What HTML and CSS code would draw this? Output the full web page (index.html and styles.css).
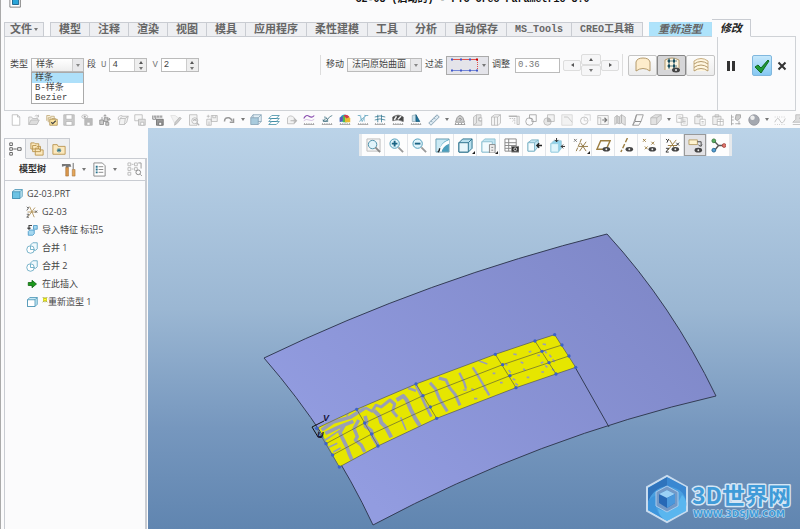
FILE: index.html
```html
<!DOCTYPE html>
<html lang="zh-CN">
<head>
  <meta charset="UTF-8" />
  <title>G2-03 (启动的) - PTC Creo Parametric 3.0</title>
  <link rel="stylesheet" href="styles.css">
</head>
<body>

  <header class="titlebar">
    <svg class="app-icon" viewBox="0 0 16 18"><path d="M1 0h12v16H1z" fill="#fff" stroke="#777"/><path d="M4 3h7v10H4z" fill="#2aa5d8" stroke="#125b86"/></svg>
    <h1>G2-03 (启动的) - PTC Creo Parametric 3.0</h1>
  </header>

  <!-- Ribbon tabs -->
  <nav class="tabs">
    <button class="tab file">文件<i class="caret"></i></button>
    <button class="tab">模型</button>
    <button class="tab">注释</button>
    <button class="tab">渲染</button>
    <button class="tab">视图</button>
    <button class="tab">模具</button>
    <button class="tab">应用程序</button>
    <button class="tab">柔性建模</button>
    <button class="tab">工具</button>
    <button class="tab">分析</button>
    <button class="tab">自动保存</button>
    <button class="tab small">MS_Tools</button>
    <button class="tab small">CREO工具箱</button>
    <button class="tab context">重新造型</button>
    <button class="tab active">修改</button>
  </nav>

  <!-- Ribbon -->
  <section class="ribbon">
    <div class="group">
      <label for="type">类型</label>
      <div class="drop type-drop">
        <select id="type">
          <option>样条</option>
          <option>B-样条</option>
          <option>Bezier</option>
        </select>
        <ul class="menu">
          <li class="selected">样条</li>
          <li>B-样条</li>
          <li>Bezier</li>
        </ul>
      </div>
      <span>段</span>
      <label class="axis" for="seg-u">U</label>
      <div class="spin">
        <input id="seg-u" type="text" value="4">
        <div class="spin-btns">
          <button aria-label="U +"><i class="caret up"></i></button>
          <button aria-label="U -"><i class="caret"></i></button>
        </div>
      </div>
      <label class="axis" for="seg-v">V</label>
      <div class="spin">
        <input id="seg-v" type="text" value="2">
        <div class="spin-btns">
          <button aria-label="V +"><i class="caret up"></i></button>
          <button aria-label="V -"><i class="caret"></i></button>
        </div>
      </div>
    </div>

    <div class="group edit">
      <label for="move">移动</label>
      <div class="drop move-drop">
        <select id="move">
          <option>法向原始曲面</option>
        </select>
      </div>
      <span>过滤</span>
      <button class="filter" aria-label="过滤">
        <svg viewBox="0 0 30 18"><path d="M3 3.500h25" stroke="#e0524e"/><path d="M28.500 4v10" stroke="#e0524e" stroke-dasharray="1 1"/><path d="M3 14.500h25" stroke="#7286d8"/><path d="M2 3.500h2M11 3.500h2M20 3.500h2M2 14.500h2M11 14.500h2M20 14.500h2M27 14.500h2" stroke="#4258c8" stroke-width="2"/><path d="M27 3.500h2" stroke="#c00" stroke-width="2"/></svg>
        <i class="caret"></i>
      </button>
      <label for="adjust">调整</label>
      <input id="adjust" class="adjust" type="text" value="0.36">
      <div class="pad">
        <button aria-label="左"><i class="caret left"></i></button>
        <div class="pad-mid">
          <button aria-label="上"><i class="caret up"></i></button>
          <button aria-label="下"><i class="caret"></i></button>
        </div>
        <button aria-label="右"><i class="caret right"></i></button>
      </div>
      <div class="modes">
        <button aria-label="曲面"><svg viewBox="0 0 20 18"><path d="M3 15V6q1-4 7-4t7 4v9q-7-5-14 0z" fill="#fdeccb" stroke="#b49a6c"/></svg></button>
        <button class="on" aria-label="控制点"><svg viewBox="0 0 20 18"><path d="M3 14V4q7-4 14 0v8" fill="#fbf3df" stroke="#b49a6c"/><path d="M7 2v11M12 2v11M5 5h10M5 10h10" stroke="#5a7f86"/><path d="M6 5h2M11 5h2M6 10h2M11 10h2" stroke="#164d5e" stroke-width="3"/><ellipse cx="14" cy="14" rx="4" ry="2.500" fill="#444"/><circle cx="14" cy="14" r="1" fill="#eee"/></svg></button>
        <button aria-label="曲线"><svg viewBox="0 0 20 18"><path d="M3 15V5q7-5 14 0v10" fill="#fff6e0" stroke="#c8ae80"/><path d="M3 8q7-5 14 0M3 11.500q7-5 14 0M3 15q7-5 14 0" stroke="#b49a6c"/></svg></button>
      </div>
    </div>

    <div class="confirm">
      <button class="pause" aria-label="暂停"><svg viewBox="0 0 10 12"><path d="M1 1h3v10H1zM6 1h3v10H6z" fill="#333"/></svg></button>
      <button class="ok" aria-label="确定"><svg viewBox="0 0 18 18"><path d="M2 10l3-2 3 3 7-8 1 1-8 12z" fill="#1f9a35" stroke="#0f6a20"/></svg></button>
      <button class="cancel" aria-label="取消"><svg viewBox="0 0 10 10"><path d="M1.500 1.500l7 7M8.500 1.500l-7 7" stroke="#333" stroke-width="2"/></svg></button>
    </div>
  </section>

  <!-- Quick access toolbar -->
  <div class="quickbar">
    <button aria-label="新建"><svg viewBox="0 0 16 16"><path d="M3 1h7l3 3v11H3zM10 1v3h3" fill="#fff"/></svg></button>
    <button aria-label="打开"><svg viewBox="0 0 16 16"><path d="M1 14V4h4l1 2h7v2" fill="#eee"/><path d="M1 14l3-6h11l-3 6z" fill="#ddd"/><path d="M9 3q3-3 5 0M14 1v3h-3"/></svg></button>
    <button aria-label="选择"><svg viewBox="0 0 16 16"><path d="M1 9V2h4l1 1h5v3M3 11V5h4l1 1h5" fill="#f8efd8" stroke="#bba36f"/><path d="M5 7h10v8H5z" fill="#fae3a0" stroke="#a98a4a"/><path d="M7 11l2 2 4-4" stroke="#444" stroke-width="1.500"/></svg></button>
    <button aria-label="保存"><svg viewBox="0 0 16 16"><path d="M1 1h14v14H1z" fill="#ccc"/><path d="M4 1h8v6H4zM4 10h8v5H4z" fill="#fff"/></svg></button>
    <button aria-label="备份"><svg viewBox="0 0 16 16"><path d="M5 6h10v9H5z" fill="#bbb"/><path d="M8 11h4v4H8z" fill="#fff"/><ellipse cx="5" cy="3.500" rx="4" ry="2.500"/><circle cx="5" cy="3.500" r="1" fill="#888"/></svg></button>
    <button aria-label="装配"><svg viewBox="0 0 16 16" stroke="#888"><path d="M1 8h5v6H1zM7 5h5v5H7zM9 11h4v4H9z" fill="#ccc"/><path d="M8 5V1M6 3l2-2 2 2M11 7h4M13 5l2 2-2 2M4 8V4"/></svg></button>
    <button aria-label="重新生成"><svg viewBox="0 0 16 16"><path d="M4 6l3-3h8l-2 8-3 3H3z" fill="#f2f2f2"/><path d="M4 6h7l-1 8M11 6l4-3M2 8q-2-6 5-6"/></svg></button>
    <button aria-label="保存副本"><svg viewBox="0 0 16 16"><path d="M1 1h10v8H1z" fill="#f8f8f8"/><path d="M6 7h9v8H6z" fill="#ddd"/><path d="M9 11h4v4H9z" fill="#fff"/></svg></button>
    <button aria-label="测量保存"><svg viewBox="0 0 16 16" stroke="#666"><path d="M1 2v5M3 2v3M5 2v5M7 2v3M9 2v3M11 2v3M13 2v3M1 7h4"/><path d="M6 7h9v8H6z" fill="#999"/><path d="M9 11h4v4H9z" fill="#fff"/></svg></button>
    <button aria-label="涂刷"><svg viewBox="0 0 16 16"><path d="M1 2h6l5 4-5 8z" fill="#f2f2f2" stroke="#ddd"/><path d="M7 11l6-7 2 2-6 7-3 2z" fill="#ccc"/></svg></button>
    <button aria-label="查找"><svg viewBox="0 0 16 16"><path d="M2 1h10v14H2z" fill="#f5f5f5"/><circle cx="9" cy="9" r="4"/><path d="M12 12l3 3M7 9q2-3 4 0" stroke-width="1.500"/></svg></button>
    <button aria-label="导出"><svg viewBox="0 0 16 16"><path d="M1 7h6v8H1zM7 2h8v8H7z" fill="#f2f2f2"/><path d="M9 2v3h4V2M3 1v4M1 3h4M4 10v5"/></svg></button>
    <button aria-label="重做"><svg viewBox="0 0 16 16"><path d="M2 10q0-6 6-5 3 1 4 4M14 6v5H9" stroke="#999" stroke-width="2"/></svg></button>
    <button class="more" aria-label="更多"><i class="caret"></i></button>
    <button aria-label="外观"><svg viewBox="0 0 16 16" stroke="#7f9eb1"><path d="M4 1h11v9H4z" fill="#e3eff6"/><path d="M1 5h10v9H1z" fill="#a9cbdd"/><path d="M1 5l3-4M11 5l4-4M11 14l4-4"/></svg></button>
    <button aria-label="层"><svg viewBox="0 0 16 16" stroke="#3787a0"><path d="M1 14l4-4h10l-4 4zM1 10l4-4h10l-4 4zM1 6l4-4h10l-4 4z" fill="#fff"/></svg></button>
    <button aria-label="注解"><svg viewBox="0 0 16 16"><path d="M2 13V5q4-5 9 0v8z" fill="#f2f2f2"/><path d="M6 9h8M11 6l3 3-3 3" stroke-width="1.500"/></svg></button>
    <button aria-label="曲率"><svg viewBox="0 0 16 16"><path d="M1 6q3-6 7-3t7-1" stroke="#8b4fb0" stroke-width="1.500"/><path d="M1 9q3-3 7-1t7-1" stroke="#c9b0d8"/><path d="M1 14h14M2 12v2M5 12v2M8 12v2M11 12v2M14 12v2" stroke="#999"/></svg></button>
    <button aria-label="半径"><svg viewBox="0 0 16 16"><path d="M2 8q5 3 7-1t6-5M4 4q5 0 5 6H3q0-4 5-4" stroke="#3c6d7e"/><path d="M1 14h14M2 12v2M5 12v2M8 12v2M11 12v2M14 12v2" stroke="#999"/></svg></button>
    <button aria-label="着色曲率"><svg viewBox="0 0 16 16"><g stroke="none"><path d="M1 10V5q4-6 8-4v10z" fill="#29a8c8"/><path d="M5 3q4-3 6 0v8H5z" fill="#55b94e"/><path d="M8 2q4-2 7 4v5H8z" fill="#e9ba31"/><path d="M6 2q4-3 8 2l-4 2z" fill="#d13a4d"/><path d="M1 5l4-2v6l-4 2z" fill="#6353ba"/></g><path d="M1 14h14M2 12v2M5 12v2M8 12v2M11 12v2M14 12v2" stroke="#999"/></svg></button>
    <button aria-label="偏移分析"><svg viewBox="0 0 16 16" stroke="#5a9db8"><path d="M1 2h3l3 8 4-8h4M3 10L12 2"/><path d="M5 1v9M10 1v9" stroke="#9bcadd"/><path d="M1 14h14M2 12v2M5 12v2M8 12v2M11 12v2M14 12v2" stroke="#999"/></svg></button>
    <button aria-label="网格"><svg viewBox="0 0 16 16" stroke="#2c738e"><path d="M1 4q7-3 14 0M1 8q7-3 14 0M5 1v10M10 1v10"/><path d="M1 14h14M2 12v2M5 12v2M8 12v2M11 12v2M14 12v2" stroke="#999"/></svg></button>
    <button aria-label="反射"><svg viewBox="0 0 16 16"><path d="M1 9V4q7-5 14 0v6q-7-4-14-1z" fill="#444" stroke="#666"/><path d="M3 8l3-5M8 7l4-4" stroke="#eee" stroke-width="2"/><path d="M1 14h14M2 12v2M5 12v2M8 12v2M11 12v2M14 12v2" stroke="#999"/></svg></button>
    <button aria-label="拔模"><svg viewBox="0 0 16 16"><path d="M3 10V2l5-1v9z" fill="#c7e1ec" stroke="#93abb5"/><path d="M8 1l5 9H8z" fill="#1d749e" stroke="#185a79"/><path d="M1 14h14M2 12v2M5 12v2M8 12v2M11 12v2M14 12v2" stroke="#999"/></svg></button>
    <button aria-label="测量"><svg viewBox="0 0 16 16" stroke="#6d8da3"><path d="M1 12L12 1l3 3L4 15z" fill="#deeaf2"/><path d="M4 9l2 2M6 7l1 1M8 5l2 2M10 3l1 1"/></svg></button>
    <button class="more" aria-label="更多"><i class="caret"></i></button>
    <button aria-label="质量"><svg viewBox="0 0 16 16" stroke="#888"><path d="M4 5q4-6 8 0l2 6H2z" fill="#ccc"/><path d="M6 7q2-3 4 0l-2 2M1 14h14M2 12v2M6 12v2M10 12v2M14 12v2"/></svg></button>
    <button aria-label="实体化"><svg viewBox="0 0 16 16"><path d="M2 4l4-3v11l-4 3zM6 1h6v4q-4 0-3 3t4 1v6H2" fill="#e6e6e6"/><path d="M9 5h4v4H9z"/></svg></button>
    <button aria-label="加厚"><svg viewBox="0 0 16 16"><path d="M2 4l4-3h8v11l-3 3H2z" fill="#f4f4f4"/><path d="M6 4v11M10 4v11M2 4h8l4-3"/></svg></button>
    <button aria-label="修剪"><svg viewBox="0 0 16 16"><path d="M1 3h11" stroke-width="2"/><path d="M2 6h7v8M6 10l3-4" stroke-dasharray="2 1"/><path d="M12 3h3v11h-3z" fill="#eee"/></svg></button>
    <button aria-label="合并"><svg viewBox="0 0 16 16" stroke="#999"><circle cx="6" cy="10" r="5"/><path d="M6 1h9v9H9V6H6z"/></svg></button>
    <button aria-label="相交"><svg viewBox="0 0 16 16"><circle cx="6" cy="10" r="5" fill="#e6e6e6"/><path d="M6 1h9v9H6z" fill="#f2f2f2"/><path d="M6 5q4 0 5 5H6z" fill="#bbb"/></svg></button>
    <button aria-label="倒角"><svg viewBox="0 0 16 16"><path d="M1 1h14v14H1z" fill="#f2f2f2" stroke="#d4d4d4"/><path d="M4 4h5l6 7" stroke="#bbb"/></svg></button>
    <button aria-label="圆角"><svg viewBox="0 0 16 16"><circle cx="7" cy="9" r="5"/><path d="M7 1h8v8M7 4v5h4" stroke="#ccc"/></svg></button>
    <button aria-label="延伸"><svg viewBox="0 0 16 16"><path d="M1 2h14v12H1zM1 5h4v9" fill="#f6f6f6"/><path d="M7 8h6M10 5l3 3-3 3" stroke="#777" stroke-width="1.500"/></svg></button>
    <button aria-label="偏移"><svg viewBox="0 0 16 16"><path d="M1 4l3-2v10l-3 2zM4 2l3 2v9l-3-1zM7 4l3-3v11l-3 1zM10 1l5 3v11l-5-3z" fill="#e2e2e2"/></svg></button>
    <button aria-label="移除"><svg viewBox="0 0 16 16" stroke="#888"><path d="M1 15l3-5h8l-3 5zM6 1h9l-3 9H4zM1 15l5-14" fill="#fafafa"/></svg></button>
    <button aria-label="拉伸"><svg viewBox="0 0 16 16"><path d="M1 5l6-4h8v6l-6 7H1z" fill="#e2e2e2"/><path d="M1 5h8l6-4M9 5v9"/></svg></button>
    <button class="more" aria-label="更多"><i class="caret"></i></button>
    <button aria-label="复制"><svg viewBox="0 0 16 16"><path d="M1 1h8v10H1zM7 5h8v10H7z" fill="#fff"/><path d="M3 4h4M3 6h4M9 8h4M9 10h4M9 12h4"/></svg></button>
    <button aria-label="粘贴"><svg viewBox="0 0 16 16"><path d="M1 3h10v10H1zM4 1h4v3H4z" fill="#eee"/><path d="M8 7h7v8H8z" fill="#fff"/><path d="M10 10h3M10 12h3"/></svg></button>
    <button aria-label="选择性粘贴"><svg viewBox="0 0 16 16"><path d="M1 3h11v11H1zM4 1h5v3H4z" fill="#eee"/><path d="M7 7h8v8H7zM7 10h8M11 7v8" fill="#fff"/></svg></button>
    <button aria-label="关系"><svg viewBox="0 0 16 16" stroke="#999"><path d="M2 1v14M2 4h3M2 8h3M2 13h3M7 13h7M12 9v5"/><path d="M8 1h6v4l-4 4-3-2z" fill="#ccc"/></svg></button>
    <button aria-label="球"><svg viewBox="0 0 16 16"><circle cx="8" cy="8" r="7" fill="#a4a8b0" stroke="#8f9299"/><circle cx="6" cy="5" r="3" fill="#eee" stroke="none"/></svg></button>
    <button class="more" aria-label="更多"><i class="caret"></i></button>
    <button aria-label="点"><svg viewBox="0 0 16 16"><path d="M1 4h14M1 14h14" stroke-dasharray="1 2"/><path d="M1 11q4-9 7-2t7-3"/></svg></button>
    <button aria-label="印章"><svg viewBox="0 0 16 16"><path d="M5 1h8l-3 5h5v5H1l4-4z" fill="#ddd"/><path d="M1 14h14"/></svg></button>
  </div>

  <main class="work">
    <!-- Model tree -->
    <aside class="side">
      <div class="side-tabs">
        <button class="on" aria-label="模型树"><svg viewBox="0 0 16 16" stroke="#555"><path d="M2 1h3v3H2zM2 6.500h3v3H2zM2 12h3v3H2zM11 6.500h4v3h-4zM6 8h4" fill="#fff"/></svg></button>
        <button aria-label="文件夹"><svg viewBox="0 0 16 16" stroke="#b8924c"><path d="M1 8V1h4l1 1h4v6zM3 11V4h4l1 1h4v6zM6 15V7h4l1 2h4v6z" fill="#fbe8bd"/></svg></button>
        <button aria-label="收藏夹"><svg viewBox="0 0 16 16"><path d="M1 14V3h5l1 2h8v9z" fill="#fbe8bd" stroke="#b8924c"/><path d="M8 7v5M5.500 9.500h5M6 8l4 3M10 8l-4 3" stroke="#28718a"/></svg></button>
      </div>
      <div class="side-body">
        <div class="side-head">
          <h2>模型树</h2>
          <button aria-label="设置"><svg viewBox="0 0 16 16"><path d="M1 2h9l1 3H8v1H5V4L1 5z" fill="#777"/><path d="M5 6h3v9H5z" fill="#d8954a" stroke="#99642a" stroke-width=".5"/><path d="M13 1v7" stroke="#666"/><path d="M12 8h3v7h-3z" fill="#e4a65a" stroke="#99642a" stroke-width=".5"/></svg></button>
          <button class="more" aria-label="设置菜单"><i class="caret"></i></button>
          <button aria-label="显示"><svg viewBox="0 0 16 16" stroke="#888"><path d="M2 1h9l3 3v11H2z" fill="#fff"/><path d="M4 5h2M4 8h2M4 11h2" stroke="#28718a" stroke-width="2"/><path d="M7 5h5M7 8h5M7 11h5"/></svg></button>
          <button class="more" aria-label="显示菜单"><i class="caret"></i></button>
          <button class="find" aria-label="查找"><svg viewBox="0 0 16 16" stroke="#bbb"><path d="M1 1h3v3H1zM1 6h3v3H1zM1 11h3v3H1zM8 1h3v3H8zM8 6h3v3H8zM5 2.500h2M5 7.500h2"/><circle cx="12" cy="11" r="2.500" stroke="#888"/><path d="M14 13l2 2M12 1h3v6" stroke="#999"/></svg></button>
        </div>
        <ul class="tree">
          <li class="root"><svg viewBox="0 0 16 16" stroke="#3f8caf"><path d="M2 5l3-3h10v9l-3 3H2z" fill="#c5e9f6"/><path d="M2 5h10v9H2z" fill="#6cc3e4"/><path d="M12 5l3-3"/></svg>G2-03.PRT</li>
          <li><svg viewBox="0 0 16 16"><path d="M3 14L12 2M5 1l6 14M2 8h12" stroke="#a78442"/><path d="M1 1l2 2 1-2M3 3l-2 3M12 6l3 3M15 6l-3 3M1 11h3l-3 4h3" stroke="#444"/></svg>G2-03</li>
          <li><svg viewBox="0 0 16 16" stroke="#3a8fc0"><path d="M10 2h5v5h-5zM3 10l2-2h6v5l-2 2H3z" fill="#a6d8f0"/><path d="M4 7V2h4M2 5l2 2 2-2" stroke="#444" stroke-width="1.500"/></svg>导入特征 标识5</li>
          <li><svg viewBox="0 0 16 16" stroke="#4f9cba"><path d="M6 4l3-3h6v8l-2 2H8" fill="#f0f9fd"/><circle cx="6" cy="10" r="5" fill="#fff"/><path d="M6 5v5h5"/></svg>合并 1</li>
          <li><svg viewBox="0 0 16 16" stroke="#4f9cba"><path d="M6 4l3-3h6v8l-2 2H8" fill="#f0f9fd"/><circle cx="6" cy="10" r="5" fill="#fff"/><path d="M6 5v5h5"/></svg>合并 2</li>
          <li><svg viewBox="0 0 16 16"><path d="M3 6h5V3l6 5-6 5v-3H3z" fill="#1c9a1c" stroke="#0b5d0b"/></svg>在此插入</li>
          <li><svg viewBox="0 0 16 16" stroke="#3f8caf"><path d="M2 5l3-3h10v9l-3 3H2z" fill="#c5e9f6"/><path d="M2 5h10v9H2z" fill="#fff"/><path d="M12 5l3-3"/></svg><svg class="spark" viewBox="0 0 8 10" stroke="#8c8c00"><path d="M1 1l6 7M7 1L1 8M4 1v7" /><path d="M2 3h4v3H2z" fill="#ff3" stroke="#cc0"/></svg>重新造型 1</li>
        </ul>
      </div>
    </aside>

    <!-- Graphics area -->
    <section class="view">
      <svg class="scene" viewBox="148 128 652 401" preserveAspectRatio="xMinYMin slice">
        <defs>
          <linearGradient id="skin" gradientUnits="userSpaceOnUse" x1="640" y1="250" x2="380" y2="510">
            <stop offset="0" stop-color="#7f88c8"/>
            <stop offset="1" stop-color="#929ce0"/>
          </linearGradient>
          <clipPath id="strip">
            <path d="M205 322L320 268L498 192L736 103L855 63L914 44L936 75L957 108L977 142L918 162L798 203L560 295L384 378L268 441L248 405L228 371Z"/>
          </clipPath>
        </defs>
        <path d="M264 358Q428 279 607 234Q672 305 716 396Q538 437 373 525Q331 435 264 358Z" fill="url(#skin)" stroke="#333c55"/>
        <path d="M575 367L609 427" stroke="#333c55"/>
        <g transform="translate(250 320) scale(.33333)">
          <g clip-path="url(#strip)">
            <path d="M205 322L320 268L498 192L736 103L855 63L914 44L977 142L918 162L798 203L560 295L384 378L268 441Z" fill="#e6e600"/>
            <g stroke="#9a9fb4" stroke-linejoin="round">
              <path d="M215 330L250 306L300 292L345 264M226 340L264 322L310 304" stroke-width="11"/>
              <path d="M345 262L366 274L378 255L395 262" stroke-width="8"/>
              <path d="M226 360L250 344L268 332M236 382L262 370M250 396L272 384" stroke-width="5"/>
              <path d="M282 316L270 338L276 352L290 380L298 402L306 420" stroke-width="11"/>
              <path d="M326 300L312 326L322 350L316 360L334 376L344 396" stroke-width="10"/>
              <path d="M345 288L350 306L346 318L364 332L368 350L384 376" stroke-width="11"/>
              <path d="M372 272L388 288L394 308L408 322L424 352" stroke-width="12"/>
              <path d="M392 262L420 240L434 252L428 274L442 290" stroke-width="9"/>
              <path d="M440 240L460 228L470 240L482 268L496 296L510 318" stroke-width="12"/>
              <path d="M474 204L498 212M498 196L512 224L524 250L544 290" stroke-width="8"/>
              <path d="M540 188L556 206L568 236L592 274" stroke-width="9"/>
              <path d="M566 174L588 180L598 202L616 224L630 256" stroke-width="9"/>
              <path d="M628 158L642 186L648 206M668 142L682 164L696 188L718 226" stroke-width="7"/>
              <path d="M686 122L712 132M452 292L468 330M300 268L290 288" stroke-width="5"/>
              <path d="M664 206l8 4M672 236l10 0M728 160l8 0M750 188l8 0M766 130l6 6M776 150l6 8M790 102l10 2M788 176l8 4M812 126l8 4M820 146l6 6M836 96l8-2M830 172l8 0M862 106l8 0M872 130l8-4M874 156l8 0M878 72l10 2M884 92l6 8M898 104l6 8M908 118l6 8M886 136l6 6M906 146l6 6M796 190l8 6M640 210l10 0M702 206l6 4" stroke-width="5"/>
            </g>
          </g>
          <g stroke="#5a5c38" stroke-width="2">
            <path d="M200 325L320 268L498 192L736 103L855 63L914 44L977 142L918 162L798 203L560 295L384 378L268 441Z"/>
            <path d="M228 371L344 309L519 227L758 134L876 94L936 75M248 405L365 342L541 261L780 167L897 128L957 108"/>
            <path d="M320 268L384 378M498 192L560 295M736 103L798 203M855 63L918 162"/>
          </g>
          <g fill="#3c62c8">
            <circle cx="200" cy="325" r="5"/><circle cx="228" cy="371" r="5"/><circle cx="248" cy="405" r="5"/><circle cx="268" cy="441" r="5"/>
            <circle cx="320" cy="268" r="5"/><circle cx="344" cy="309" r="5"/><circle cx="365" cy="342" r="5"/><circle cx="384" cy="378" r="5"/>
            <circle cx="498" cy="192" r="5"/><circle cx="519" cy="227" r="5"/><circle cx="541" cy="261" r="5"/><circle cx="560" cy="295" r="5"/>
            <circle cx="736" cy="103" r="5"/><circle cx="758" cy="134" r="5"/><circle cx="780" cy="167" r="5"/><circle cx="798" cy="203" r="5"/>
            <circle cx="855" cy="63" r="5"/><circle cx="876" cy="94" r="5"/><circle cx="897" cy="128" r="5"/><circle cx="918" cy="162" r="5"/>
            <circle cx="914" cy="44" r="5"/><circle cx="936" cy="75" r="5"/><circle cx="957" cy="108" r="5"/><circle cx="977" cy="142" r="5"/>
          </g>
        </g>
        <path d="M324 421L312 427L318 437L322 436" stroke="#111"/>
        <text class="uv" x="323" y="421">V</text>
        <text class="uv" x="317" y="438">U</text>
      </svg>

      <div class="viewbar">
        <button aria-label="重新调整"><svg viewBox="0 0 16 16"><path d="M1 1h14v13H1z" fill="#f5f5f5" stroke="#bbb"/><circle cx="7" cy="7" r="4.500" fill="#e1f4fb" stroke="#4b8ea8"/><path d="M10 10l5 5" stroke="#888" stroke-width="2"/></svg></button>
        <button aria-label="放大"><svg viewBox="0 0 16 16"><circle cx="6" cy="6" r="5" fill="#e1f4fb" stroke="#4b9ab8"/><path d="M3 6h6M6 3v6" stroke="#1c6484" stroke-width="2"/><path d="M10 10l5 5" stroke="#999" stroke-width="2"/></svg></button>
        <button aria-label="缩小"><svg viewBox="0 0 16 16"><circle cx="6" cy="6" r="5" fill="#e1f4fb" stroke="#4b9ab8"/><path d="M3 6h6" stroke="#1c6484" stroke-width="2"/><path d="M10 10l5 5" stroke="#999" stroke-width="2"/></svg></button>
        <button aria-label="重画"><svg viewBox="0 0 16 16"><path d="M1 1h14v14H1z" fill="#4b9fbd" stroke="#7aa4b5"/><path d="M1.500 1.500h13q-9 3-10 13h-3z" fill="#cdeaf4"/><path d="M4 14q2-9 11-12v4q-7 3-8 9z" fill="#fff"/><path d="M3 15q2-1 2-4" stroke="#222" stroke-width="1.500"/></svg></button>
        <button class="menu-btn" aria-label="显示样式"><svg viewBox="0 0 16 16" stroke="#276f8b"><path d="M1 5l4-4h10v10l-4 4H1z" fill="#b9e0ee"/><path d="M1 5h10v10H1zM11 5l4-4" fill="#e8f7fc"/></svg></button>
        <button class="menu-btn" aria-label="已保存方向"><svg viewBox="0 0 16 16" stroke="#8dc0d2"><path d="M1 4l3-3h11v10l-3 4H1z" fill="#c2e6f2"/><path d="M1 4h11v11H1z" fill="#f2fbfe"/><path d="M9 7h6v9H9zM11 10h2M11 13h2" fill="#eee" stroke="#888"/></svg></button>
        <button aria-label="视图管理器"><svg viewBox="0 0 16 16" stroke="#888"><path d="M1 1h12v13H1zM1 5h12M1 8h12M1 11h12M5 1v13" fill="#fff"/><path d="M8 9h8v6H8z" fill="#333"/><circle cx="12" cy="12" r="1.500" stroke="#ddd"/></svg></button>
        <button aria-label="透视图"><svg viewBox="0 0 16 16" stroke="#7fb4c8"><path d="M1 5l4-3h7v7l-4 5H1z" fill="#c2e6f2"/><path d="M1 5h7v9H1zM8 5l4-3" fill="#f2fbfe"/><path d="M16 8h-5M13 5.500L10.500 8l2.500 2.500" stroke="#222" stroke-width="1.500"/></svg></button>
        <button aria-label="截面"><svg viewBox="0 0 16 16"><path d="M1 6l3-3h8v8l-3 4H1z" fill="#8ed3ec" stroke="#9cc9da"/><path d="M1 6h8v9H1z" fill="#dff5fc" stroke="#9bd0e2"/><path d="M7 0v4M5 2l2 2 2-2M16 9h-4M14 7l-2 2 2 2" stroke="#222"/></svg></button>
        <button class="menu-btn" aria-label="基准显示"><svg viewBox="0 0 16 16" stroke="#8f7540"><path d="M1 1l3 3M4 1L1 4" stroke="#777"/><path d="M9 1L3 15" stroke-dasharray="4 1"/><path d="M7 14l7-10M8 5l6 9M6 9h10" /></svg></button>
        <button aria-label="平面显示"><svg viewBox="0 0 16 16"><path d="M1 12L5 3h10l-4 9z" stroke="#9b7d40" stroke-width="1.500"/><ellipse cx="11" cy="12" rx="4" ry="2.500" fill="#444"/><circle cx="11" cy="12" r="1" fill="#eee"/></svg></button>
        <button aria-label="轴显示"><svg viewBox="0 0 16 16"><path d="M9 0L2 15" stroke="#9b7d40" stroke-width="1.500" stroke-dasharray="5 2"/><ellipse cx="11" cy="12" rx="4" ry="2.500" fill="#444"/><circle cx="11" cy="12" r="1" fill="#eee"/></svg></button>
        <button aria-label="点显示"><svg viewBox="0 0 16 16"><path d="M1 1l3 3M4 1L1 4M10 4l3 3M13 4l-3 3M3 9l3 3M6 9l-3 3" stroke="#9b7d40"/><ellipse cx="11" cy="12" rx="4" ry="2.500" fill="#444"/><circle cx="11" cy="12" r="1" fill="#eee"/></svg></button>
        <button aria-label="坐标系显示"><svg viewBox="0 0 16 16"><path d="M3 13L12 2M5 2l7 12M3 8h10" stroke="#9b7d40"/><path d="M1 1l2 2 1-2M3 3L2 5M12 5l3 3M15 5l-3 3M1 11h3l-3 4h3" stroke="#333"/><ellipse cx="11" cy="12" rx="4" ry="2.500" fill="#444"/><circle cx="11" cy="12" r="1" fill="#eee"/></svg></button>
        <button class="on" aria-label="注释显示"><svg viewBox="0 0 16 16"><path d="M1 2h9v5H1z" fill="#fff4d0" stroke="#b8a06a"/><path d="M10 4h4v5M11 7l2 2 2-2" stroke="#444"/><ellipse cx="11" cy="13" rx="4" ry="2.500" fill="#444"/><circle cx="11" cy="13" r="1" fill="#eee"/></svg></button>
        <button aria-label="旋转中心"><svg viewBox="0 0 16 16"><path d="M3 3l5 5-4 5M8 8h5" stroke="#555" stroke-width="1.500"/><circle cx="3" cy="3" r="2" fill="#5cae62" stroke="#3c7c42"/><circle cx="14" cy="8" r="2" fill="#e0766e" stroke="#a84a42"/><circle cx="3" cy="13" r="2" fill="#56a0d2" stroke="#2e6b96"/></svg></button>
      </div>

      <a class="brand" href="http://www.3dsjw.com">
        <svg viewBox="0 0 157 52">
          <path d="M24 3L44 14V38L24 49L4 38V14Z" fill="#4a9fe0" stroke="#c9dcef" stroke-width="2"/>
          <path d="M24 4L5 15v14q5-14 19-16z" fill="#2f74bd"/>
          <path d="M24 4l19 10v20q2-18-19-21z" fill="#3a88d2"/>
          <path d="M5 29v8l19 11q-15-8-10-26-7 2-9 7z" fill="#3d95dc"/>
          <path d="M43 34v4L24 48q-8-4-9-12 12 5 20-6l4-8q5 4 4 12z" fill="#5ab6ef"/>
          <path d="M24 13l11 6v14l-11 6-11-6V19z" fill="#7399c7" stroke="#a9cbed"/>
          <path d="M24 17l8 4v9l-8 5-8-5v-9z" fill="#2768b5"/>
          <path d="M24 17l8 4-8 4-8-4z" fill="#9bd0f5"/><path d="M24 25l8-4v9l-8 5z" fill="#4a98dc"/>
          <text class="brand-name" x="49" y="31">3D世界网</text>
          <text class="brand-url" x="50" y="44">WWW.3DSJW.COM</text>
        </svg>
      </a>
    </section>
  </main>

</body>
</html>
```

FILE: styles.css
```css
* {
  box-sizing: border-box;
}

body {
  margin: 0;
  height: 100vh;
  display: flex;
  flex-direction: column;
  overflow: hidden;
  border-left: 1px solid #aaa;
  background: #fbfbfc;
  color: #444;
  font: 9px/12px "Liberation Mono", "Noto Sans CJK SC", monospace;
}

button, input, select {
  font: inherit;
  color: inherit;
  margin: 0;
  padding: 0;
  border: none;
  background: none;
}

button {
  display: flex;
  align-items: center;
  justify-content: center;
}

ul {
  list-style: none;
  margin: 0;
  padding: 0;
}

svg {
  display: block;
  fill: none;
}

.caret {
  border: 2px solid transparent;
  border-top: 3px solid #777;
  border-bottom: none;
}

.caret.up {
  border-top: none;
  border-bottom: 3px solid #555;
}

.caret.left {
  border: 2px solid transparent;
  border-right: 3px solid #555;
  border-left: none;
}

.caret.right {
  border: 2px solid transparent;
  border-left: 3px solid #555;
  border-right: none;
}

/* title */
.titlebar {
  flex: none;
  height: 19px;
  display: flex;
  align-items: flex-start;
  padding-left: 8px;
}

.app-icon {
  width: 14px;
  height: 16px;
  margin-top: -7px;
}

.titlebar h1 {
  flex: 1;
  margin: -7px 0 0 122px;
  text-align: center;
  font-size: 10px;
  line-height: 14px;
  color: #111;
  white-space: nowrap;
}

/* ribbon tabs */
.tabs {
  flex: none;
  display: flex;
  align-items: flex-end;
  height: 18px;
  padding-left: 3px;
  margin-bottom: -1px;
  position: relative;
}

.tab {
  height: 15px;
  padding: 0 8px;
  border: solid #c9ccd2;
  border-width: 1px 1px 1px 0;
  background: #eeeff2;
  color: #666;
  font-size: 11px;
  font-weight: bold;
  line-height: 12px;
  white-space: nowrap;
}

.tab.small {
  font-size: 10px;
}

.tab.file {
  padding: 0 5px;
  gap: 2px;
  margin-right: 6px;
  border-left-width: 1px;
}

.tab.file + .tab {
  border-left-width: 1px;
}

.tab.context {
  margin-left: 6px;
  padding: 0 9px;
  border-color: #aee0f8;
  border-bottom-color: #c9ccd2;
  background: #aee3fb;
  font-style: italic;
}

.tab.active {
  height: 18px;
  padding-top: 2px;
  border-bottom-color: #fbfbfc;
  background: #fbfbfc;
  color: #222;
  font-style: italic;
}

/* ribbon */
.ribbon {
  flex: none;
  height: 75px;
  display: flex;
  margin: 0 4px 0 3px;
  border: 1px solid #cfd2d6;
}

.group {
  height: 20px;
  margin-top: 18px;
  padding-left: 5px;
  display: flex;
  align-items: center;
  gap: 3px;
  white-space: nowrap;
}

.group.edit {
  margin-left: auto;
  padding-left: 5px;
  border-left: 1px solid #ddd;
}

.group .axis {
  margin-left: 2px;
  color: #777;
}

.drop {
  position: relative;
}

.drop select {
  display: block;
  width: 100%;
  height: 14px;
  padding: 0 4px;
  border: 1px solid #bbb;
  background: linear-gradient(#fff, #eee);
  line-height: 12px;
  appearance: none;
}

.drop::after {
  content: "";
  position: absolute;
  right: 4px;
  top: 6px;
  border: 2px solid transparent;
  border-top: 3px solid #888;
  border-bottom: none;
}

.drop::before {
  content: "";
  position: absolute;
  right: 1px;
  top: 1px;
  width: 10px;
  height: 12px;
  border-left: 1px solid #ccc;
  background: #e8e8ea;
}

.type-drop {
  width: 53px;
}

.move-drop {
  width: 75px;
}

.menu {
  position: absolute;
  z-index: 2;
  left: 0;
  top: 14px;
  width: 100%;
  border: 1px solid #aaa;
  background: #fff;
  line-height: 10px;
}

.menu li {
  padding-left: 3px;
}

.menu .selected {
  background: #aee0fa;
}

.spin {
  display: flex;
  width: 38px;
  height: 14px;
  border: 1px solid #bbb;
  background: #fff;
}

.spin input {
  flex: 1;
  min-width: 0;
  padding-left: 2px;
}

.spin-btns {
  width: 12px;
  display: flex;
  flex-direction: column;
  border-left: 1px solid #ccc;
  background: #eee;
}

.spin-btns button {
  flex: 1;
}

.filter {
  width: 43px;
  height: 19px;
  gap: 3px;
  border: 1px solid #aaa;
  background: #e4e4ea;
}

.filter svg {
  width: 30px;
  height: 18px;
}

.adjust {
  width: 45px;
  height: 15px;
  margin-left: 2px;
  padding-left: 2px;
  border: 1px solid #bbb;
  background: #fff;
  color: #777;
}

.pad {
  display: flex;
  align-items: center;
  padding-right: 3px;
  border-right: 1px solid #ddd;
}

.pad button {
  width: 18px;
  height: 11px;
  border: 1px solid #ddd;
  border-radius: 2px;
  background: #f6f6f7;
}

.pad-mid button {
  width: 20px;
}

.modes {
  display: flex;
  margin: 0 2px;
}

.modes button {
  width: 29px;
  height: 21px;
  border: 1px solid #c4c4c4;
  border-radius: 2px;
  background: linear-gradient(#fdfdfd, #ececec);
}

.modes button.on {
  border-color: #888;
  background: #d6d6d8;
}

.modes svg {
  width: 20px;
  height: 18px;
}

.confirm {
  width: 78px;
  display: flex;
  align-items: center;
  gap: 5px;
  padding: 0 8px 16px 7px;
  border-left: 1px solid #cfd2d6;
}

.pause {
  width: 12px;
}

.pause svg {
  width: 10px;
  height: 12px;
}

.ok {
  width: 21px;
  height: 21px;
  margin-left: 10px;
  border: 1px solid #80b7de;
  border-radius: 2px;
  background: linear-gradient(#c5e8fc, #86c8f2);
}

.ok svg {
  width: 18px;
  height: 18px;
}

.cancel svg {
  width: 10px;
  height: 10px;
}

/* quick access toolbar */
.quickbar {
  flex: none;
  height: 17px;
  display: flex;
  align-items: center;
  justify-content: space-between;
  margin-right: -5px;
  padding-left: 8px;
}

.quickbar button {
  flex: none;
  width: 14px;
  height: 14px;
}

.quickbar svg {
  width: 12px;
  height: 12px;
}

.quickbar svg:not([stroke]) {
  stroke: #b4b4b4;
}

.quickbar .more {
  width: 5px;
}

/* main area */
.work {
  flex: 1;
  min-height: 0;
  display: flex;
}

.side {
  flex: none;
  width: 147px;
  display: flex;
  flex-direction: column;
  padding: 10px 1px 0 3px;
}

.side-tabs {
  display: flex;
  position: relative;
  margin-bottom: -1px;
}

.side-tabs button {
  width: 22px;
  height: 21px;
  border: 1px solid #c9ccd2;
  border-left-width: 0;
  background: #eeeff1;
}

.side-tabs .on {
  border-left-width: 1px;
  border-bottom-color: #fbfbfc;
  background: #fbfbfc;
}

.side-tabs svg {
  width: 14px;
  height: 14px;
}

.side-body {
  flex: 1;
  border: 1px solid #c9ccd2;
  border-width: 1px 2px 0 1px;
}

.side-head {
  display: flex;
  align-items: center;
  height: 22px;
  padding-left: 14px;
  border-bottom: 1px solid #c9ccd2;
}

.side-head h2 {
  flex: none;
  margin: 0 15px 0 0;
  font-size: 9px;
  color: #333;
}

.side-head svg {
  width: 15px;
  height: 15px;
}

.side-head .more {
  width: 16px;
}

.side-head .find {
  margin-left: 4px;
}

.tree {
  padding: 4px 0 0 21px;
  font: 9px/18px "Open Sans", "Noto Sans CJK SC", sans-serif;
}

.tree li {
  display: flex;
  align-items: center;
  height: 18px;
  white-space: nowrap;
}

.tree li.root {
  margin-left: -15px;
}

.tree svg {
  flex: none;
  width: 12px;
  height: 12px;
  margin-right: 4px;
}

.tree .spark {
  width: 6px;
  height: 8px;
  margin: 0 0 4px;
}

/* graphics area */
.view {
  flex: 1;
  min-width: 0;
  position: relative;
  background: linear-gradient(#bbd3e8, #9bb7d3 45%, #7697be 75%, #6085b0);
}

.scene {
  width: 100%;
  height: 100%;
}

.uv {
  font: italic bold 9px "Liberation Sans", sans-serif;
  fill: #14143c;
}

.viewbar {
  position: absolute;
  top: 6px;
  right: 68px;
  display: flex;
  gap: 1px;
  border: solid #e6e9ec;
  border-width: 0 3px;
  background: #e2e5e9;
}

.viewbar button {
  width: 22px;
  height: 22px;
  background: #fdfdfd;
  position: relative;
}

.viewbar button.on {
  border: 1px solid #999;
  background: #e3e3e6;
}

.viewbar svg {
  width: 15px;
  height: 15px;
}

.menu-btn::after {
  content: "";
  position: absolute;
  right: 1px;
  bottom: 2px;
  border-left: 3px solid transparent;
  border-bottom: 3px solid #222;
}

.brand {
  position: absolute;
  right: 0;
  bottom: 4px;
}

.brand svg {
  width: 157px;
  height: 52px;
}

.brand text {
  fill: #409bd8;
  stroke: #d5e6f5;
  paint-order: stroke;
  stroke-linejoin: round;
}

.brand-name {
  font: bold 23px "Noto Sans CJK SC", sans-serif;
  stroke-width: 3px;
}

.brand-url {
  font: bold 9px "DejaVu Sans", sans-serif;
  stroke-width: 1px;
}
```
